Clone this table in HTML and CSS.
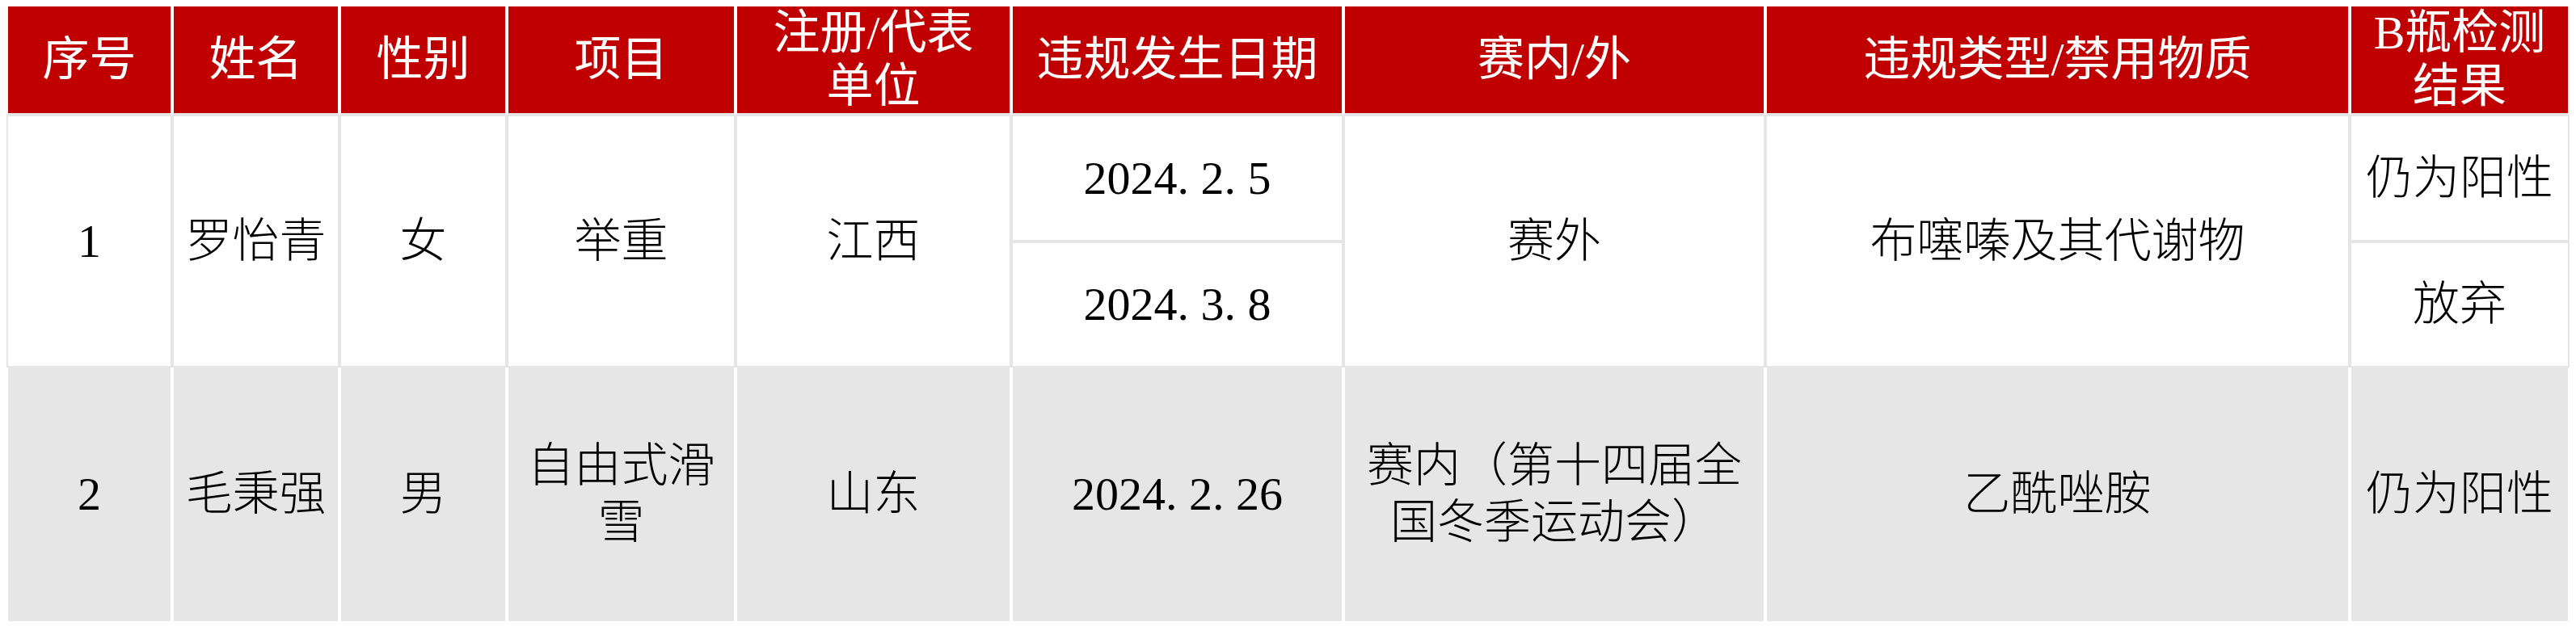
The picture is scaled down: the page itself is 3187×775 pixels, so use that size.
FILE: index.html
```html
<!DOCTYPE html>
<html lang="zh-CN">
<head>
<meta charset="utf-8">
<title>违规名单</title>
<link rel="stylesheet" href="styles.css">
</head>
<body>
<div class="table">
  <div class="cell th">序号</div>
  <div class="cell th">姓名</div>
  <div class="cell th">性别</div>
  <div class="cell th">项目</div>
  <div class="cell th">注册/代表<br>单位</div>
  <div class="cell th">违规发生日期</div>
  <div class="cell th">赛内/外</div>
  <div class="cell th">违规类型/禁用物质</div>
  <div class="cell th">B瓶检测<br>结果</div>

  <div class="cell r1 span2">1</div>
  <div class="cell r1 span2">罗怡青</div>
  <div class="cell r1 span2">女</div>
  <div class="cell r1 span2">举重</div>
  <div class="cell r1 span2">江西</div>
  <div class="cell r1">2024<span class="dot">.</span>2<span class="dot">.</span>5</div>
  <div class="cell r1 span2">赛外</div>
  <div class="cell r1 span2">布噻嗪及其代谢物</div>
  <div class="cell r1">仍为阳性</div>
  <div class="cell r1">2024<span class="dot">.</span>3<span class="dot">.</span>8</div>
  <div class="cell r1">放弃</div>

  <div class="cell r2">2</div>
  <div class="cell r2">毛秉强</div>
  <div class="cell r2">男</div>
  <div class="cell r2">自由式滑雪</div>
  <div class="cell r2">山东</div>
  <div class="cell r2">2024<span class="dot">.</span>2<span class="dot">.</span>26</div>
  <div class="cell r2">赛内（第十四届全国冬季运动会）</div>
  <div class="cell r2">乙酰唑胺</div>
  <div class="cell r2">仍为阳性</div>
</div>
</body>
</html>
```

FILE: styles.css
```css
html, body {
  background: #ffffff;
}
body {
  margin: 8px;
  font-family: "Liberation Serif", "Noto Sans CJK SC", serif;
  font-size: 58px;
  color: #000000;
}
.table {
  display: grid;
  grid-template-columns: 205px 207px 207px 283px 341px 411px 522px 723px 272px;
  grid-template-rows: 134px 157px 156px 316px;
}
.cell {
  box-sizing: border-box;
  display: flex;
  align-items: center;
  justify-content: center;
  text-align: center;
  padding: 0 12px;
  line-height: 70px;
  overflow: hidden;
}
.th {
  background: #c00000;
  color: #ffffff;
  line-height: 66px;
  border-left: 2px solid #ffffff;
  border-right: 2px solid #ffffff;
  border-bottom: 2px solid #e5e5e5;
}
.r1 {
  background: #ffffff;
  border: 2px solid #e5e5e5;
  font-weight: 300;
}
.span2 {
  grid-row: span 2;
}
.r2 {
  background: #e6e6e6;
  border-left: 2px solid #ffffff;
  border-right: 2px solid #ffffff;
  border-bottom: 2px solid #ffffff;
  font-weight: 300;
}
.dot {
  display: inline-block;
  width: 0.5em;
  text-align: left;
}
```
